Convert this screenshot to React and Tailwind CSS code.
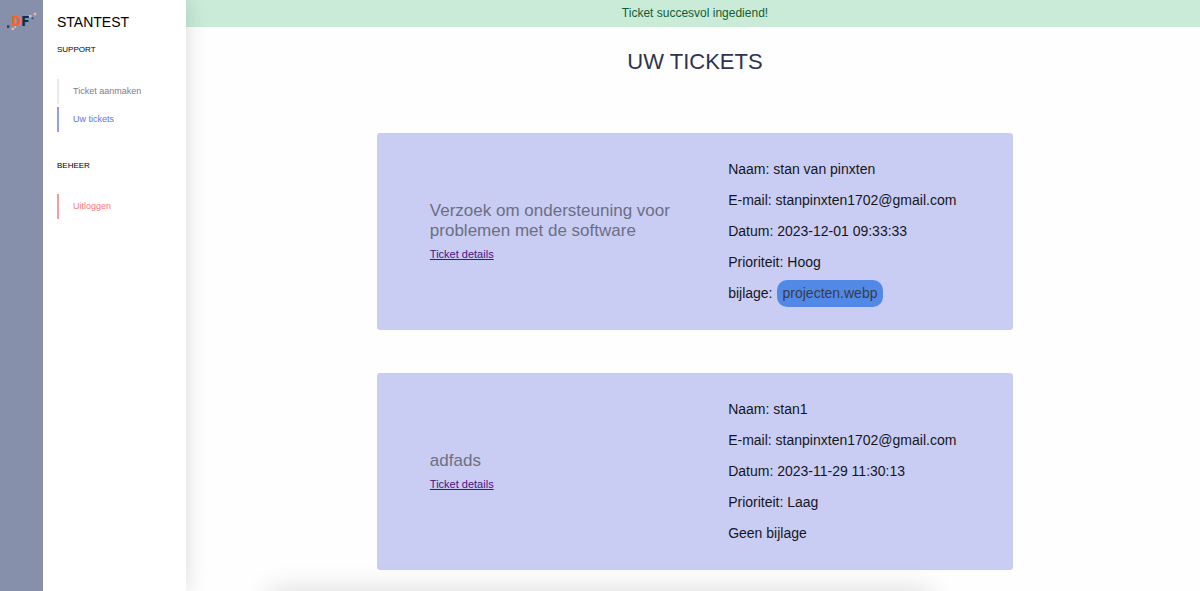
const tickets = [
  {
    title: 'Verzoek om ondersteuning voor problemen met de software',
    naam: 'stan van pinxten',
    email: 'stanpinxten1702@gmail.com',
    datum: '2023-12-01 09:33:33',
    prioriteit: 'Hoog',
    bijlage: 'projecten.webp',
  },
  {
    title: 'adfads',
    naam: 'stan1',
    email: 'stanpinxten1702@gmail.com',
    datum: '2023-11-29 11:30:13',
    prioriteit: 'Laag',
    bijlage: null,
  },
];

function Logo() {
  return (
    <svg viewBox="0 0 30 18" className="h-[18px] w-[30px]" role="img" aria-label="DF">
      <text x="5" y="14" fontFamily="Inter, sans-serif" fontWeight="900" fontSize="12.5" fill="#ff5f22">D</text>
      <text x="14.8" y="14" fontFamily="Inter, sans-serif" fontWeight="900" fontSize="12.5" fill="#0b2f45">F</text>
      <rect x="0" y="13.4" width="2.4" height="2.4" fill="#1c3c55" />
      <rect x="4.6" y="15.8" width="2.4" height="2.2" fill="#f8b795" />
      <rect x="5" y="12" width="2.4" height="2" fill="#ff5f22" />
      <rect x="7.4" y="14.2" width="1.8" height="1.8" fill="#c3c6d2" />
      <rect x="22" y="3" width="2.4" height="2.4" fill="#c3c6d2" />
      <rect x="24.6" y="5.4" width="1.8" height="1.8" fill="#36506a" />
      <rect x="26.8" y="0.8" width="2.4" height="2.4" fill="#f8b795" />
    </svg>
  );
}

function NavLink({ className, children }) {
  return (
    <a href="#" className={`flex h-[25px] items-center border-l-2 pl-3.5 text-[9px] ${className}`}>
      {children}
    </a>
  );
}

function TicketCard({ ticket }) {
  return (
    <article className="grid grid-cols-[1fr_232px] items-center gap-x-[50px] rounded-[3px] bg-[#c9cdf4] px-[53px] py-[21px]">
      <div>
        <h2 className="text-[17px] leading-5 text-[#6c6f83]">{ticket.title}</h2>
        <a href="#" className="mt-1 block w-fit text-[11px] leading-[18px] text-[#4b1183] underline">
          Ticket details
        </a>
      </div>
      <div className="flex flex-col whitespace-nowrap text-[14px] leading-[31px] text-[#15161c]">
        <p>Naam: {ticket.naam}</p>
        <p>E-mail: {ticket.email}</p>
        <p>Datum: {ticket.datum}</p>
        <p>Prioriteit: {ticket.prioriteit}</p>
        {ticket.bijlage ? (
          <p className="flex h-[31px] items-center gap-1">
            bijlage:
            <a href="#" className="rounded-[10px] bg-[#5389e6] px-[6px] leading-[27px] text-[#373c48]">
              {ticket.bijlage}
            </a>
          </p>
        ) : (
          <p>Geen bijlage</p>
        )}
      </div>
    </article>
  );
}

export default function App() {
  return (
    <div className="flex h-screen overflow-hidden bg-[#fefefe] font-['Liberation_Sans',Arial,sans-serif]">
      <aside className="z-10 flex shrink-0 bg-white shadow-[0_0_20px_rgba(30,40,60,0.17)]">
        <div className="w-[43px] bg-[#8790ab] pl-[7px] pt-3">
          <Logo />
        </div>
        <nav className="w-[143px] pl-3.5 pt-3">
          <h1 className="text-[14px] leading-5 text-black">STANTEST</h1>
          <h2 className="mt-3 text-[8px] leading-[12px] text-black">SUPPORT</h2>
          <div className="mt-[23px] flex flex-col gap-[3px]">
            <NavLink className="border-[#e9e9e9] text-[#808080]">Ticket aanmaken</NavLink>
            <NavLink className="border-[#949ee8] text-[#6474e0]">Uw tickets</NavLink>
          </div>
          <h2 className="mt-7 text-[8px] leading-[12px] text-black">BEHEER</h2>
          <div className="mt-[22px]">
            <NavLink className="border-[#ff97a0] text-[#ff7480]">Uitloggen</NavLink>
          </div>
        </nav>
      </aside>

      <main className="min-w-0 flex-1 overflow-hidden">
        <p role="status" className="bg-[#c9ebd7] pl-1 text-center text-[12px] leading-[27px] text-[#165c33]">
          Ticket succesvol ingediend!
        </p>
        <div className="pl-1">
          <h1 className="mt-5 text-center text-[22px] leading-[30px] text-[#2e344e]">UW TICKETS</h1>
          <div className="mx-auto mt-14 flex w-[63%] flex-col gap-[43px]">
            {tickets.map((ticket) => (
              <TicketCard key={ticket.datum} ticket={ticket} />
            ))}
          </div>
        </div>
      </main>

      <div className="pointer-events-none fixed inset-x-[270px] top-full h-10 shadow-[0_0_28px_rgba(0,0,0,0.15)]" />
    </div>
  );
}
